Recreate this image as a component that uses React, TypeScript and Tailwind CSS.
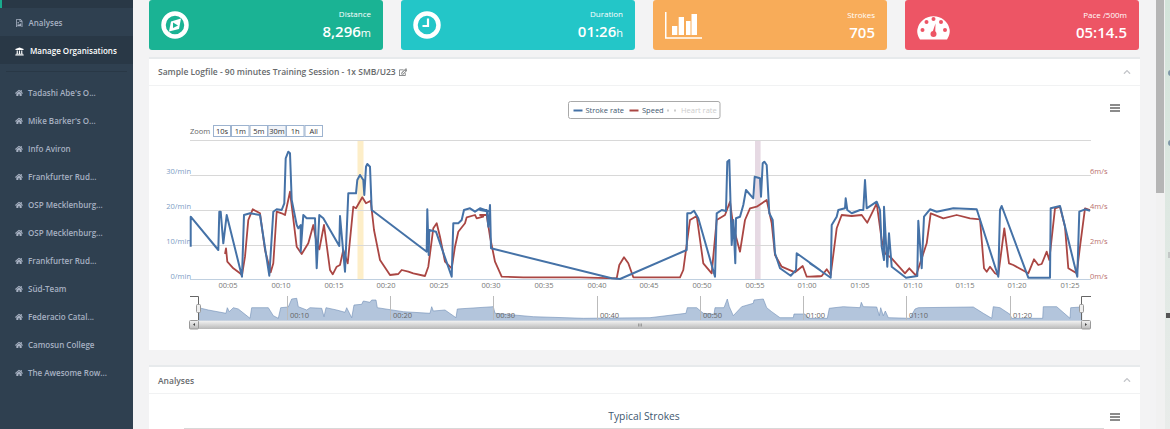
import { FaHome, FaUniversity, FaRegFileImage, FaRegEdit, FaChevronUp } from "react-icons/fa";

type P = number[][];

// traced from the chart at 3x, each run has its own origin
const scale = (ox: number, oy: number, pts: P) =>
  pts.map(([x, y]) => `${(ox + x / 3).toFixed(1)},${(oy + y / 3).toFixed(1)}`).join(" ");

const blue =
  scale(150, 130, [[122,350],[122,260],[205,360],[208,245],[212,245],[220,340],[230,255],[276,440],[282,255],[300,250],[330,255],[358,437],[370,245],[380,238],[395,240],[403,220],[407,85],[415,65],[420,70],[425,210],[440,285],[445,295],[452,285],[452,365],[460,255],[470,265],[495,265],[500,415],[508,255],[520,265],[568,348],[570,258],[585,425],[595,190],[618,190],[622,150],[630,135],[640,150],[643,195],[648,110],[652,102],[660,110],[665,240],[830,365],[832,238],[836,375],[838,300],[858,305],[905,440],[910,280],[925,280],[935,270],[942,240],[960,235],[975,245],[990,235],[1020,245]]) +
  " " +
  scale(480, 130, [[0,240],[20,240],[25,290],[30,225],[33,355],[395,445],[420,447],[620,360],[622,250],[632,250],[642,242],[655,265],[705,440],[710,250],[725,240],[738,243],[742,95],[748,90],[755,345],[760,270],[766,400],[768,265],[780,260],[790,225],[798,180],[820,205],[824,140],[840,145],[843,200],[848,100],[853,95],[860,105],[868,250],[878,270],[885,370],[900,415],[932,437],[948,420],[950,370],[1020,420]]) +
  " " +
  scale(810, 130, [[0,400],[62,443],[65,285],[80,260],[85,240],[105,235],[107,205],[112,240],[125,250],[150,240],[160,240],[165,150],[170,235],[200,215],[210,240],[215,350],[222,390],[222,230],[232,410],[237,310],[245,410],[288,443],[322,438],[325,272],[335,415],[342,260],[360,238],[380,245],[430,235],[500,238],[565,440],[570,240],[575,228],[655,443],[720,443],[722,235],[750,228],[802,440],[808,245],[825,238],[840,242]]);

const red =
  scale(150, 130, [[225,372],[228,355],[232,395],[250,415],[270,430],[276,435],[285,380],[295,270],[308,238],[330,250],[345,360],[362,427],[370,400],[380,245],[395,250],[405,255],[420,185],[440,350],[455,372],[475,340],[490,285],[500,340],[508,358],[522,285],[540,420],[548,433],[560,410],[570,405],[580,360],[593,400],[610,230],[618,235],[637,202],[648,220],[662,212],[672,300],[690,390],[720,435],[745,432],[755,420],[775,425],[790,430],[825,438],[835,410],[850,295],[860,280],[870,320],[885,395],[905,415],[915,350],[925,305],[945,280],[950,262],[975,255],[980,265],[1000,260]]) +
  " " +
  scale(480, 130, [[0,255],[20,255],[30,320],[45,395],[65,440],[130,442],[300,442],[410,445],[418,405],[432,382],[445,400],[460,442],[600,442],[610,420],[630,270],[650,258],[670,400],[695,430],[710,270],[735,255],[750,215],[760,290],[780,365],[795,270],[810,235],[830,230],[860,210],[875,280],[885,375],[905,410],[945,427],[968,408],[980,440],[1020,440]]) +
  " " +
  scale(810, 130, [[0,440],[35,438],[50,418],[62,435],[80,295],[95,255],[125,258],[155,255],[172,278],[200,220],[215,330],[225,370],[245,385],[285,430],[298,415],[318,437],[350,340],[362,250],[400,265],[440,255],[480,265],[510,268],[522,415],[530,425],[540,410],[555,430],[565,435],[583,295],[597,400],[610,405],[655,430],[672,388],[685,405],[695,402],[710,365],[718,390],[735,235],[750,230],[765,290],[775,415],[800,430],[810,350],[825,235],[840,240]]);

const navigator =
  "198.7,320.7 " +
  scale(150, 285, [[146,68],[175,75],[228,85],[232,68],[238,80],[250,68],[265,72],[285,88],[300,100],[305,68],[355,68],[370,92],[385,100],[392,68],[415,66],[425,42],[440,40],[445,65],[470,75],[480,68],[515,70],[522,95],[528,68],[560,75],[585,82],[590,68],[605,98],[612,60],[635,58],[640,48],[660,52],[665,45],[678,45],[682,68],[760,80],[840,85],[845,65],[850,78],[885,75],[918,98],[922,72],[1030,65],[1035,85],[1150,95],[1300,100],[1500,98]]) +
  " " +
  scale(650, 285, [[108,85],[112,68],[140,68],[160,85],[192,88],[195,68],[222,68],[232,42],[238,65],[250,92],[275,65],[310,55],[312,45],[340,42],[350,68],[365,80],[390,98],[430,98],[432,87],[465,87],[475,100],[532,100],[538,70],[580,65],[630,68],[634,52],[640,65],[680,66],[688,92],[692,68],[700,92],[706,78],[715,98],[780,100],[795,72],[805,68],[970,66],[1000,85],[1025,100],[1030,65],[1050,68],[1080,88],[1085,100],[1178,100],[1180,65],[1220,65],[1260,100],[1262,68],[1295,66]]) +
  " 1081.7,320.7";

const orgs = [
  "Tadashi Abe's O...",
  "Mike Barker's O...",
  "Info Aviron",
  "Frankfurter Rud...",
  "OSP Mecklenburg...",
  "OSP Mecklenburg...",
  "Frankfurter Rud...",
  "Süd-Team",
  "Federacio Catal...",
  "Camosun College",
  "The Awesome Row...",
];

const xLabels: [string, number][] = [
  ["00:05", 228], ["00:10", 281], ["00:15", 334], ["00:20", 386], ["00:25", 439], ["00:30", 491],
  ["00:35", 544], ["00:40", 597], ["00:45", 649], ["00:50", 702], ["00:55", 755], ["01:00", 807],
  ["01:05", 860], ["01:10", 913], ["01:15", 965], ["01:20", 1017], ["01:25", 1070],
];

const navTicks: [string, number][] = [
  ["00:10", 287.5], ["00:20", 390.5], ["00:30", 493.5], ["00:40", 597.5],
  ["00:50", 700.5], ["01:00", 803.5], ["01:10", 906.5], ["01:20", 1010.5],
];

const zoomBtns: [string, number, number][] = [
  ["10s", 213.5, 17], ["1m", 231.5, 17.5], ["5m", 250, 17.5],
  ["30m", 268, 18], ["1h", 286.5, 17.5], ["All", 305, 17.5],
];

const Compass = () => (
  <svg width="28" height="28" viewBox="0 0 28 28">
    <circle cx="14" cy="14" r="11.5" fill="none" stroke="#fff" strokeWidth="4.5" />
    <path d="M20 7.5 L18 18 L8 20.5 L10 10.5 Z" fill="#fff" />
    <path d="M12 11.5 L17 14.5 L12 17 Z" fill="#1ab394" />
  </svg>
);

const Clock = () => (
  <svg width="28" height="28" viewBox="0 0 28 28">
    <circle cx="14" cy="14" r="11.5" fill="none" stroke="#fff" strokeWidth="4.5" />
    <path d="M15 7.5 V15 H9.5" fill="none" stroke="#fff" strokeWidth="2.2" />
  </svg>
);

const Bars = () => (
  <svg width="37" height="28" viewBox="0 0 37 28">
    <path d="M0.7 1 V27 H37" fill="none" stroke="#fff" strokeWidth="1.6" />
    <rect x="7" y="15" width="5.3" height="9" fill="#fff" />
    <rect x="13.7" y="6" width="5.3" height="18" fill="#fff" />
    <rect x="21" y="10" width="4.5" height="14" fill="#fff" />
    <rect x="26.5" y="3" width="5.5" height="21" fill="#fff" />
  </svg>
);

const Gauge = () => (
  <svg width="33" height="26" viewBox="0 0 33 26" className="mt-[3px]">
    <path d="M3 25.5 C0 21 0 17 0.5 15 A16.2 15 0 0 1 32.5 15 C33 17 33 21 30 25.5 Z" fill="#fff" />
    <g fill="#ed5565">
      <circle cx="5.5" cy="16" r="2" />
      <circle cx="9.5" cy="8" r="2" />
      <circle cx="16.5" cy="5" r="2" />
      <circle cx="24" cy="8" r="2" />
      <circle cx="28" cy="16" r="2" />
      <circle cx="16.5" cy="20" r="3" />
      <path d="M15.2 19 L18.5 9.5 L18.2 19.5 Z" />
    </g>
  </svg>
);

const StatCard = ({ bg, icon, label, value, unit }: { bg: string; icon: React.ReactNode; label: string; value: string; unit?: string }) => (
  <div className={`${bg} h-[50px] rounded-[3px] flex items-center justify-between pl-3 pr-3 text-white`}>
    {icon}
    <div className="text-right">
      <div className="text-[8px] leading-[12px] mb-[1px] mt-[1px]">{label}</div>
      <div className="text-[15px] leading-[20px] font-semibold">
        {value}
        {unit && <span className="text-[11px] font-normal">{unit}</span>}
      </div>
    </div>
  </div>
);

const PanelHead = ({ children }: { children: React.ReactNode }) => (
  <div className="h-[27px] flex items-center justify-between pl-[9px] pr-[9px] border-b border-[#f1f2f3] text-[#676a6c] text-[8.5px] font-semibold">
    <div className="flex items-center gap-[3px]">{children}</div>
    <FaChevronUp className="text-[#c4c6ca] text-[8px]" />
  </div>
);

const Hamburger = ({ y }: { y: number }) => (
  <path d={`M1110 ${y}h10M1110 ${y + 3}h10M1110 ${y + 6}h10`} stroke="#666" strokeWidth="1.6" />
);

const Chart = () => (
  <svg width="991" height="264" viewBox="149 86 991 264" className="block" style={{ fontFamily: "'Open Sans', sans-serif" }}>
    <defs>
      <linearGradient id="scrollbar" x1="0" y1="0" x2="0" y2="1">
        <stop offset="0" stopColor="#f4f4f4" />
        <stop offset="1" stopColor="#b8b8b8" />
      </linearGradient>
    </defs>

    <rect x="568.5" y="101.5" width="151.5" height="17" rx="2" fill="none" stroke="#a9a9a9" />
    <path d="M573.5 110.5h9" stroke="#4572a7" strokeWidth="2" />
    <text x="585.5" y="112.8" fontSize="7.5" fill="#3e576f">Stroke rate</text>
    <path d="M629.5 110.5h9" stroke="#aa4643" strokeWidth="2" />
    <text x="642" y="112.8" fontSize="7.5" fill="#3e576f">Speed</text>
    <path d="M667 110.5h2M674 110.5h2" stroke="#ccc" strokeWidth="2" />
    <text x="681" y="112.8" fontSize="7.5" fill="#ccc">Heart rate</text>

    <text x="190" y="134" fontSize="7.5" fill="#666">Zoom</text>
    {zoomBtns.map(([t, x, w]) => (
      <g key={t}>
        <rect x={x} y="125.5" width={w} height="11" fill={t === "30m" ? "#f0f3f8" : "#fff"} stroke="#9db3cf" />
        <text x={x + w / 2} y="134" fontSize="7.5" fill="#333" textAnchor="middle">{t}</text>
      </g>
    ))}

    <rect x="357.5" y="140" width="6" height="139" fill="#fdeec8" />
    <rect x="755" y="140" width="5.6" height="139" fill="#e6d9e3" />

    {[140.5, 175.5, 210.5, 245.5].map((y) => (
      <path key={y} d={`M190 ${y}H1091`} stroke="#d8d8d8" />
    ))}
    <path d="M190 279.5H1091" stroke="#c0d0e0" />

    {[["30/min", 174], ["20/min", 209], ["10/min", 244], ["0/min", 279]].map(([t, y]) => (
      <text key={t} x="191" y={y} fontSize="7.5" fill="#7d9cc4" textAnchor="end">{t}</text>
    ))}
    {[["6m/s", 174], ["4m/s", 209], ["2m/s", 244], ["0m/s", 279]].map(([t, y]) => (
      <text key={t} x="1090" y={y} fontSize="7.5" fill="#b9706d">{t}</text>
    ))}
    {xLabels.map(([t, x]) => (
      <text key={t} x={x} y="288" fontSize="7.5" fill="#777" textAnchor="middle">{t}</text>
    ))}

    <polyline points={red} fill="none" stroke="#aa4643" strokeWidth="1.8" strokeLinejoin="round" />
    <polyline points={blue} fill="none" stroke="#4572a7" strokeWidth="2" strokeLinejoin="round" />

    <polygon points={navigator} fill="#b3c5dc" stroke="#6f8db5" strokeWidth="0.6" />
    {navTicks.map(([t, x]) => (
      <g key={t}>
        <path d={`M${x} 296V320`} stroke="#bbb" />
        <text x={x + 2.5} y="318" fontSize="7.5" fill="#666">{t}</text>
      </g>
    ))}
    <path d="M190 296.5H198.5V320M1081.5 320V296.5H1091" fill="none" stroke="#666" />
    <rect x="196.5" y="304.5" width="4" height="8" rx="1" fill="#eee" stroke="#999" />
    <rect x="1079.5" y="304.5" width="4" height="8" rx="1" fill="#eee" stroke="#999" />

    <rect x="198.5" y="320.5" width="883" height="8.5" fill="url(#scrollbar)" />
    <rect x="189.5" y="320.5" width="9" height="8.5" rx="1" fill="url(#scrollbar)" stroke="#999" />
    <rect x="1081.5" y="320.5" width="9" height="8.5" rx="1" fill="url(#scrollbar)" stroke="#999" />
    <path d="M195 323v3l-2-1.5zM1085 323v3l2-1.5z" fill="#444" />
    <path d="M638.5 323.5v3M640 323.5v3M641.5 323.5v3" stroke="#777" strokeWidth="0.6" />

    <Hamburger y={105} />
  </svg>
);

const Strokes = () => (
  <svg width="991" height="35" viewBox="149 394 991 35" className="block" style={{ fontFamily: "'Open Sans', sans-serif" }}>
    <text x="644" y="419.5" fontSize="10.3" fill="#3e576f" textAnchor="middle">Typical Strokes</text>
    <path d="M184 428.5H1104" stroke="#d8d8d8" />
    <Hamburger y={414} />
  </svg>
);

export default function App() {
  return (
    <div className="flex h-[429px] w-[1170px] overflow-hidden font-['Open_Sans',sans-serif]">
      <aside className="w-[133px] shrink-0 bg-[#2f4050] text-[#a7b1c2] text-[8px] font-semibold">
        <div className="h-2 bg-[#293846]">
          <div className="h-2 w-[2px] bg-[#19aa8d]" />
        </div>
        <div className="h-7 pt-[2px] flex items-center pl-[15px] gap-[5px]">
          <FaRegFileImage className="text-[8.5px]" />
          <span>Analyses</span>
        </div>
        <div className="h-7 pt-[2px] flex items-center pl-[15px] gap-[6px] bg-[#293846] text-white">
          <FaUniversity className="text-[9px]" />
          <span>Manage Organisations</span>
        </div>
        <div className="mx-[6px] mt-[7px] mb-[6px] h-px bg-[#293846]" />
        {orgs.map((name, i) => (
          <div key={i} className="h-7 pt-[2px] flex items-center pl-[15px] gap-[5px]">
            <FaHome className="text-[8px]" />
            <span>{name}</span>
          </div>
        ))}
      </aside>

      <main className="w-[1023px] shrink-0 bg-[#f3f3f4] pl-4 pr-4">
        <div className="grid grid-cols-4 gap-[18px] w-[990px]">
          <StatCard bg="bg-[#1ab394]" icon={<Compass />} label="Distance" value="8,296" unit="m" />
          <StatCard bg="bg-[#23c6c8]" icon={<Clock />} label="Duration" value="01:26" unit="h" />
          <StatCard bg="bg-[#f8ac59]" icon={<Bars />} label="Strokes" value="705" />
          <StatCard bg="bg-[#ed5565]" icon={<Gauge />} label="Pace /500m" value="05:14.5" />
        </div>

        <section className="mt-[7px] bg-white border-t-2 border-[#e7eaec] w-[991px]">
          <PanelHead>
            <span>Sample Logfile - 90 minutes Training Session - 1x SMB/U23</span>
            <FaRegEdit className="text-[8.5px]" />
          </PanelHead>
          <Chart />
        </section>

        <section className="mt-[15px] bg-white border-t-2 border-[#e7eaec] w-[991px]">
          <PanelHead>
            <span className="mt-[2px]">Analyses</span>
          </PanelHead>
          <Strokes />
        </section>
      </main>

      <div className="w-[9px] shrink-0 bg-[#f1f1f1]">
        <div className="h-[193px] w-[8px] bg-[#b5b5b5]" />
      </div>
      <div className="relative flex-1 bg-gradient-to-b from-[#d3e4da] to-[#e9ecea]">
        <span className="absolute left-[3px] top-[70px] h-[6px] w-[3px] rounded-l-full bg-[#7d95a6]" />
        <span className="absolute left-[3px] top-[140px] h-[6px] w-[3px] rounded-l-full bg-[#7d95a6]" />
        <span className="absolute left-[3px] top-[252px] h-[6px] w-[2px] bg-[#c3c7c6]" />
        <span className="absolute left-[1px] top-[313px] h-[5px] w-[4px] bg-[#555]" />
      </div>
    </div>
  );
}
